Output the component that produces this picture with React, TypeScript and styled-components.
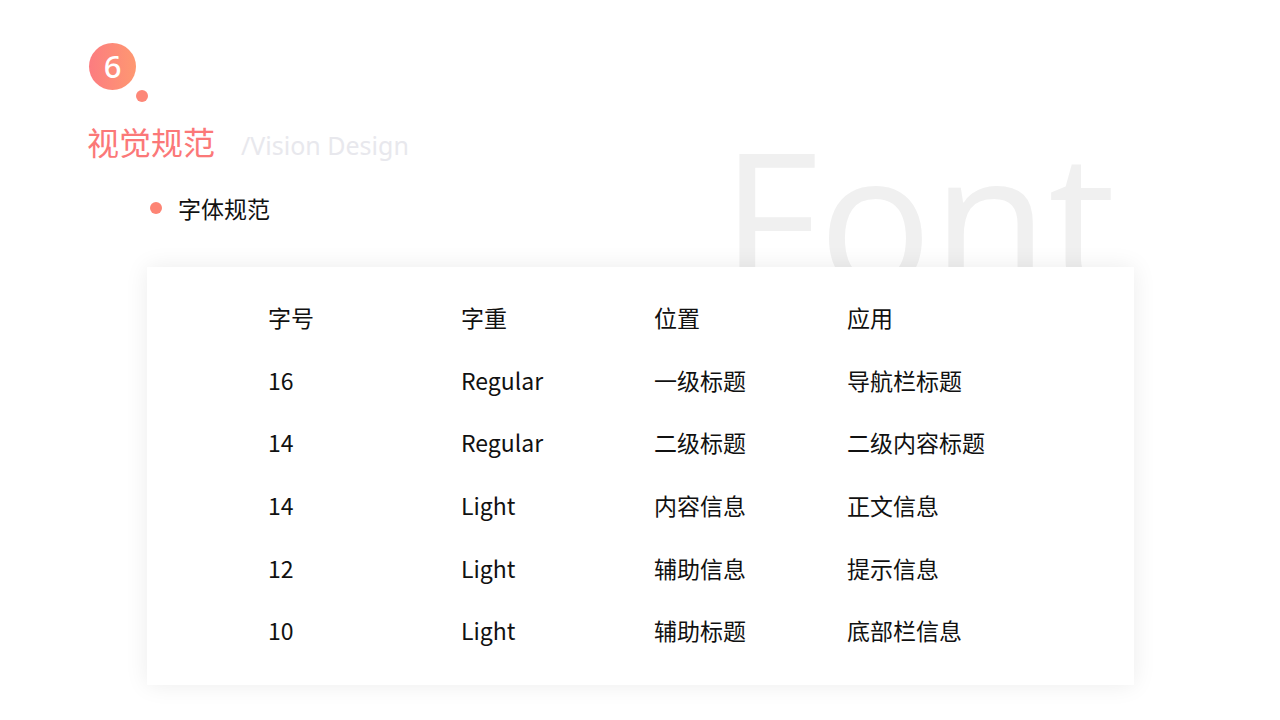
import styled, { createGlobalStyle } from "styled-components";

const GlobalStyle = createGlobalStyle`
  html, body {
    margin: 0;
    padding: 0;
    background: #ffffff;
  }
  body {
    font-family: "Noto Sans", "Noto Sans CJK SC", sans-serif;
  }
`;

const Page = styled.div`
  position: relative;
  width: 1280px;
  height: 720px;
  overflow: hidden;
  background: #ffffff;
`;

// big grey watermark, cut off where the card starts
const Watermark = styled.div`
  position: absolute;
  left: 721px;
  top: 121px;
  height: 146px;
  overflow: hidden;
  font-family: "Open Sans", sans-serif;
  font-size: 189px;
  line-height: 1;
  color: #f0f0f0;
  z-index: 0;
  user-select: none;
`;

const Header = styled.header`
  position: relative;
  z-index: 1;
  padding: 43px 0 0 89px;
`;

const BadgeWrap = styled.div`
  position: relative;
  width: 47px;
  height: 47px;
`;

const Badge = styled.div`
  width: 47px;
  height: 47px;
  border-radius: 50%;
  background: linear-gradient(90deg, #fc7c80, #fe9871);
  display: flex;
  align-items: center;
  justify-content: center;
  color: #ffffff;
  font-family: "Noto Sans", sans-serif;
  font-size: 31px;
  font-weight: 500;
  line-height: 1;
`;

const Dot = styled.span`
  position: absolute;
  left: 47px;
  top: 47px;
  width: 12px;
  height: 12px;
  border-radius: 50%;
  background: #fd8778;
`;

const TitleRow = styled.div`
  display: flex;
  align-items: baseline;
  gap: 26px;
  margin: 31px 0 0 -2px;
`;

const Title = styled.h1`
  margin: 0;
  font-family: "Noto Sans CJK SC", sans-serif;
  font-size: 32px;
  font-weight: 400;
  line-height: 40px;
  color: #fb7878;
`;

const SubTitle = styled.span`
  font-size: 25px;
  line-height: 40px;
  color: #e8e8ed;
`;

const Section = styled.div`
  display: flex;
  align-items: center;
  gap: 16px;
  margin: 28px 0 0 61px;
`;

const Bullet = styled.span`
  width: 12px;
  height: 12px;
  border-radius: 50%;
  background: #fd8474;
`;

const SectionName = styled.span`
  font-family: "Noto Sans CJK SC", sans-serif;
  font-size: 23px;
  line-height: 30px;
  color: #111111;
`;

const Card = styled.div`
  position: relative;
  z-index: 1;
  width: 987px;
  height: 418px;
  box-sizing: border-box;
  margin: 44px 0 0 147px;
  padding: 19px 0 0 121px;
  background: #ffffff;
  box-shadow: 0 0 22px rgba(0, 0, 0, 0.08);
`;

const Grid = styled.div`
  display: grid;
  grid-template-columns: repeat(4, 193px);
  grid-auto-rows: 62.6px;
`;

const Cell = styled.div`
  display: flex;
  align-items: center;
  font-family: "Noto Sans CJK SC", sans-serif;
  font-size: 23px;
  line-height: 30px;
  color: #111111;
  white-space: nowrap;
`;

const rows = [
  ["字号", "字重", "位置", "应用"],
  ["16", "Regular", "一级标题", "导航栏标题"],
  ["14", "Regular", "二级标题", "二级内容标题"],
  ["14", "Light", "内容信息", "正文信息"],
  ["12", "Light", "辅助信息", "提示信息"],
  ["10", "Light", "辅助标题", "底部栏信息"],
];

export default function App() {
  return (
    <Page>
      <GlobalStyle />
      <Watermark>Font</Watermark>
      <Header>
        <BadgeWrap>
          <Badge>6</Badge>
          <Dot />
        </BadgeWrap>
        <TitleRow>
          <Title>视觉规范</Title>
          <SubTitle>/Vision Design</SubTitle>
        </TitleRow>
        <Section>
          <Bullet />
          <SectionName>字体规范</SectionName>
        </Section>
      </Header>
      <Card>
        <Grid>
          {rows.map((r, i) =>
            r.map((c, j) => <Cell key={i + "-" + j}>{c}</Cell>)
          )}
        </Grid>
      </Card>
    </Page>
  );
}
